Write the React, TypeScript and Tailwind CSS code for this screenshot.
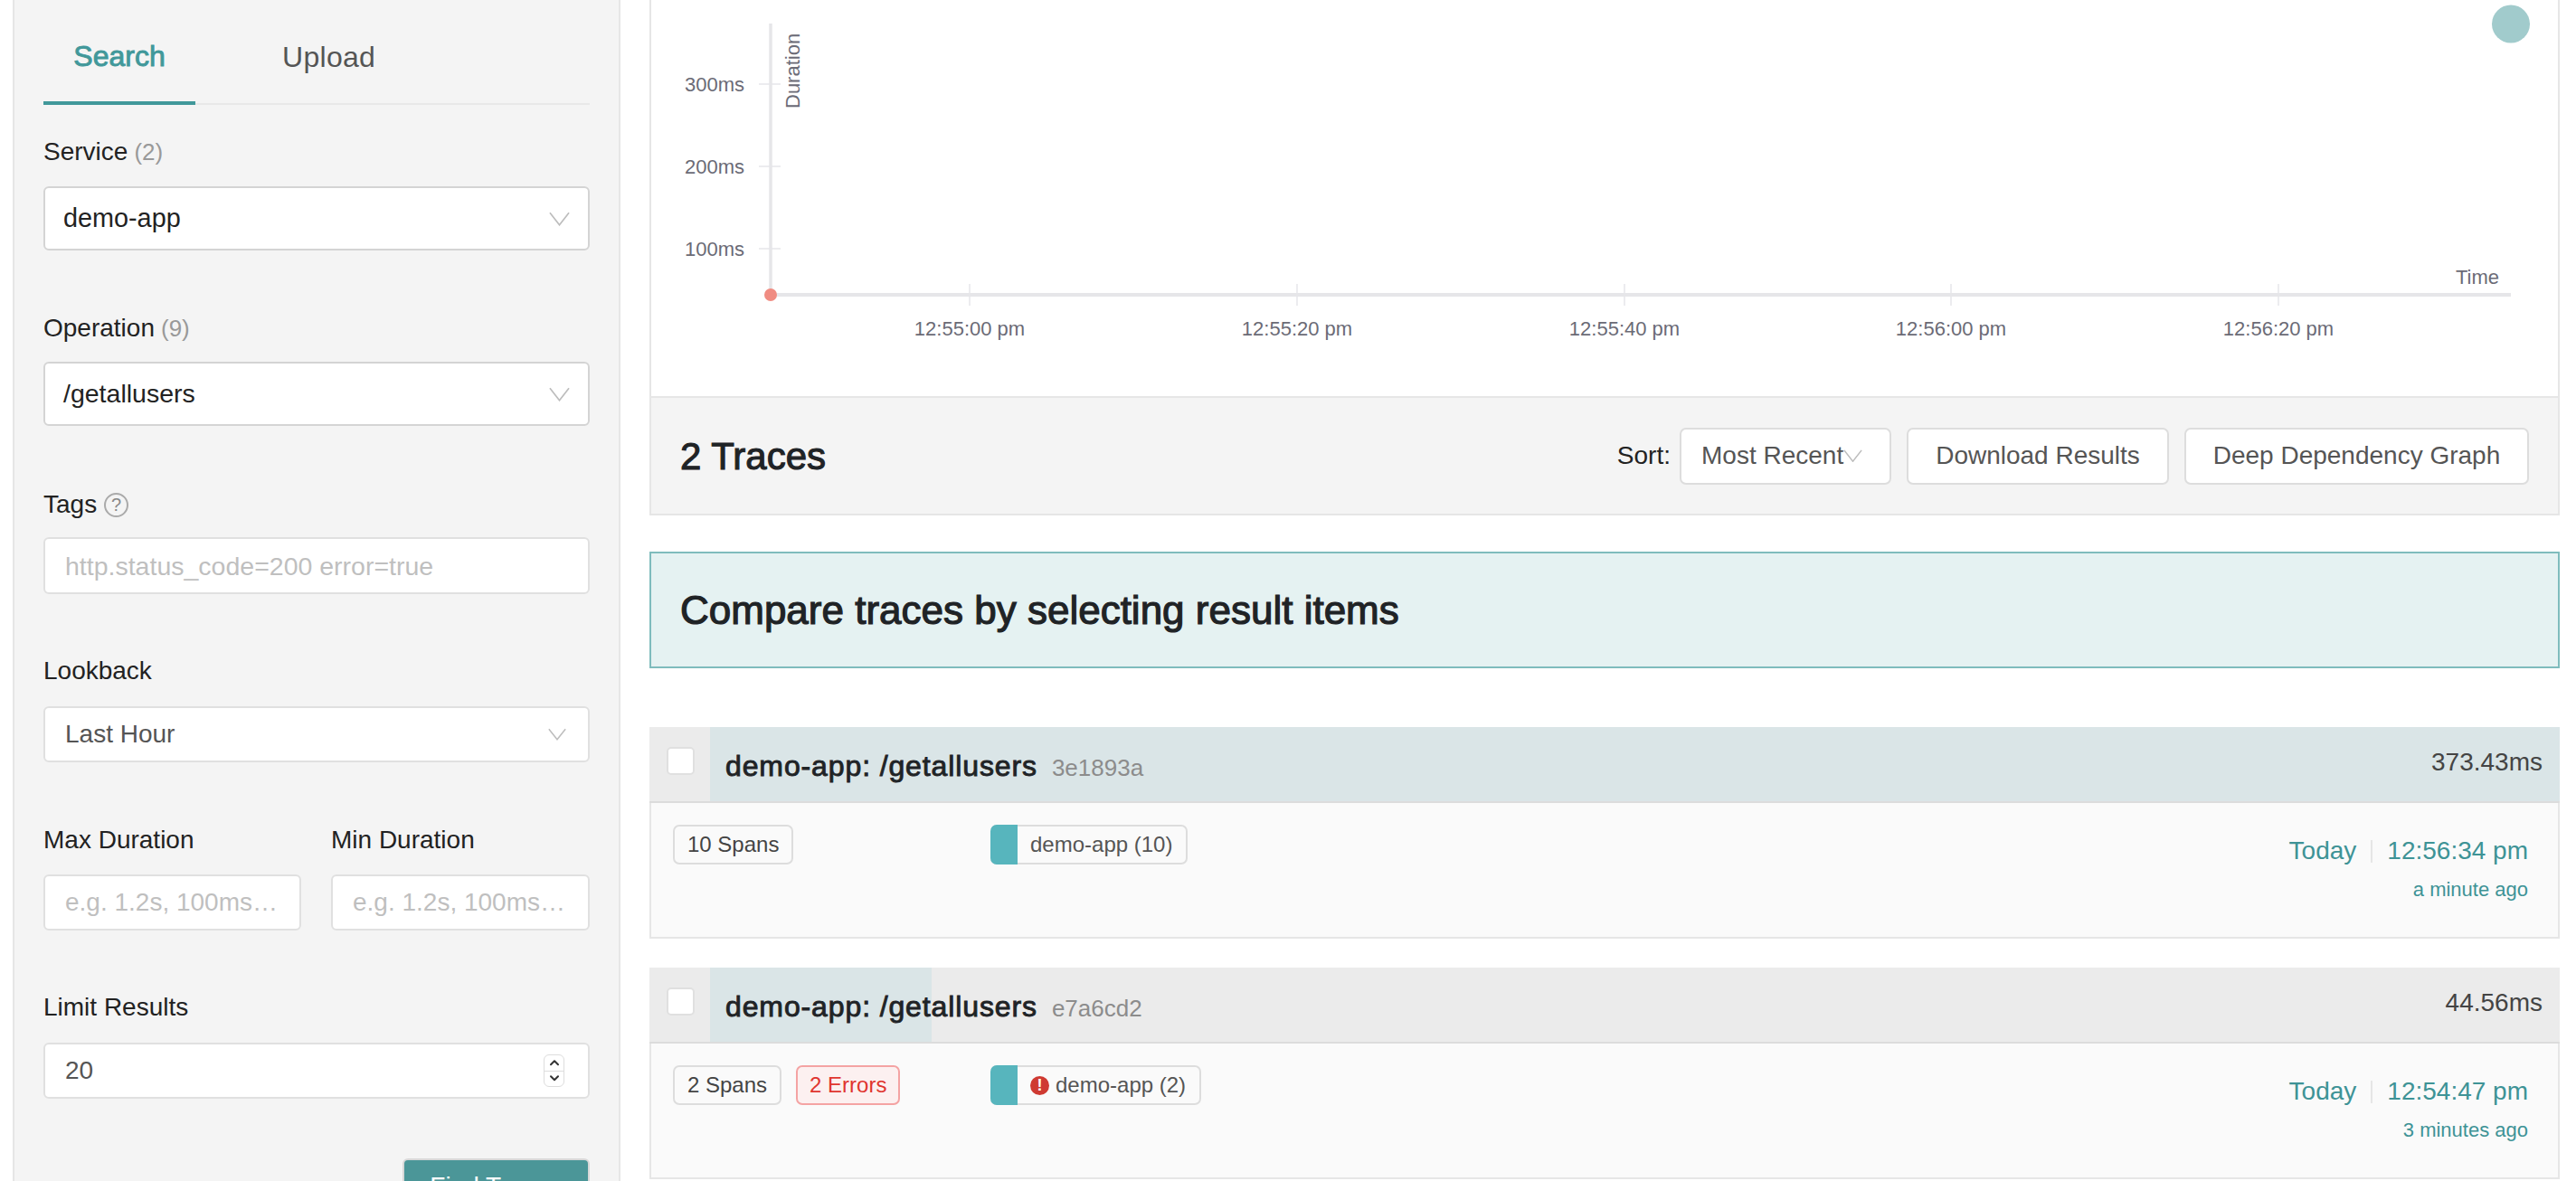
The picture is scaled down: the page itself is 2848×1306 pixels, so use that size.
import { ChevronDown, ChevronUp } from "lucide-react";

const Chevron = ({ className }: { className: string }) => (
  <svg className={className} viewBox="0 0 24 16" fill="none" stroke="#bdbdbd" strokeWidth="1.8">
    <path d="M1 1 L12 15 L23 1" />
  </svg>
);

const Label = ({ children }: { children: React.ReactNode }) => (
  <div className="h-10 flex items-center text-[28px] text-[#222]">{children}</div>
);

const xTicks = [
  { x: 352, t: "12:55:00 pm" },
  { x: 714, t: "12:55:20 pm" },
  { x: 1076, t: "12:55:40 pm" },
  { x: 1437, t: "12:56:00 pm" },
  { x: 1799, t: "12:56:20 pm" },
];

const yTicks = [
  { y: 93, t: "300ms" },
  { y: 184, t: "200ms" },
  { y: 275, t: "100ms" },
];

const Chart = () => (
  <svg className="block w-[2108px] h-[438px]" fontSize="22">
    {yTicks.map((v) => (
      <g key={v.t}>
        <line x1="119" x2="143" y1={v.y} y2={v.y} stroke="#ececef" strokeWidth="2" />
        <text x="103" y={v.y + 8} textAnchor="end" fill="#6b6b76">
          {v.t}
        </text>
      </g>
    ))}
    {xTicks.map((v) => (
      <g key={v.t}>
        <line x1={v.x} x2={v.x} y1="314" y2="338" stroke="#ececef" strokeWidth="2" />
        <text x={v.x} y="371" textAnchor="middle" fill="#6b6b76">
          {v.t}
        </text>
      </g>
    ))}
    <line x1="132" x2="132" y1="26" y2="326" stroke="#e6e6e9" strokeWidth="3.5" />
    <line x1="132" x2="2056" y1="326" y2="326" stroke="#e6e6e9" strokeWidth="4" />
    <text transform="translate(164,120) rotate(-90)" fill="#6b6b76">
      Duration
    </text>
    <text x="1995" y="314" fill="#6b6b76">
      Time
    </text>
    <circle cx="132" cy="326" r="7" fill="#f08c82" />
    <circle cx="2056" cy="26.5" r="21" fill="#a1cbcc" />
  </svg>
);

type trace = {
  hash: string;
  duration: string;
  barClass: string;
  spans: string;
  errors?: string;
  service: string;
  time: string;
  ago: string;
};

const traces: trace[] = [
  {
    hash: "3e1893a",
    duration: "373.43ms",
    barClass: "w-full",
    spans: "10 Spans",
    service: "demo-app (10)",
    time: "12:56:34 pm",
    ago: "a minute ago",
  },
  {
    hash: "e7a6cd2",
    duration: "44.56ms",
    barClass: "w-[245px]",
    spans: "2 Spans",
    errors: "2 Errors",
    service: "demo-app (2)",
    time: "12:54:47 pm",
    ago: "3 minutes ago",
  },
];

const TraceCard = ({ item }: { item: trace }) => (
  <div className="w-full">
    <div className="flex h-[84px] bg-[#ebebeb] border-b-2 border-[#dcdcdc]">
      <div className="w-[67px] shrink-0 pl-[19px] pt-[22px]">
        <div className="w-[31px] h-[31px] bg-white border-2 border-[#e0e0e0] rounded-[5px]"></div>
      </div>
      <div className="relative flex-1 flex items-start">
        <div className={`absolute left-0 top-0 h-full bg-[#dae5e7] ${item.barClass}`}></div>
        <div className="relative flex items-baseline pl-[17px] pt-[24px]">
          <span className="text-[32px] leading-[38px] tracking-[0.88px] text-[#1f2326] [-webkit-text-stroke:0.9px_#1f2326]">
            demo-app: /getallusers
          </span>
          <span className="ml-[16px] text-[26px] text-[#8c8c8c]">{item.hash}</span>
        </div>
        <div className="relative ml-auto pr-[19px] pt-[23px] text-[28px] leading-[32px] text-[#444]">
          {item.duration}
        </div>
      </div>
    </div>
    <div className="flex h-[150px] bg-[#fafafa] border-x-2 border-b-2 border-[#e6e6e6] pl-[24px] pr-[33px]">
      <div className="w-[351px] shrink-0 flex items-start gap-[16px] pt-[24px]">
        <div className="h-[44px] px-[14px] flex items-center text-[24px] text-[#444] border-2 border-[#ddd] rounded-[7px]">
          {item.spans}
        </div>
        {item.errors && (
          <div className="h-[44px] px-[13px] flex items-center text-[24px] text-[#e0352f] bg-[#fcf0f0] border-2 border-[#f4a3a3] rounded-[7px]">
            {item.errors}
          </div>
        )}
      </div>
      <div className="pt-[24px]">
        <div className="h-[44px] flex items-center text-[24px] text-[#555] border-2 border-l-0 border-[#ddd] rounded-[7px] pr-[15px]">
          <div className="w-[30px] h-[44px] bg-[#57b5bd] rounded-l-[7px] mr-[14px]"></div>
          {item.errors && (
            <div className="w-[21px] h-[21px] mr-[7px] rounded-full bg-[#cf3a32] flex items-center justify-center text-white text-[18px] font-bold">
              !
            </div>
          )}
          {item.service}
        </div>
      </div>
      <div className="ml-auto pt-[36px] text-[#3e9396] flex flex-col items-end">
        <div className="flex items-center text-[28px] leading-[34px]">
          Today
          <span className="w-[2px] h-[25px] bg-[#e6e6e6] mx-[16px]"></span>
          {item.time}
        </div>
        <div className="text-[22px] leading-[28px] mt-[12px]">{item.ago}</div>
      </div>
    </div>
  </div>
);

const App = () => {
  return (
    <div className="w-[2848px] h-[1306px] overflow-hidden bg-white flex font-['Liberation_Sans',Arial,sans-serif]">
      <div className="ml-[14px] w-[672px] h-[1306px] overflow-hidden bg-[#f4f4f4] border-x-2 border-[#e6e6e6] px-[32px] flex flex-col shrink-0">
        <div className="h-[116px] shrink-0 flex gap-[64px] border-b-2 border-[#e8e8e8] text-[32px]">
          <div className="h-[116px] w-[168px] flex items-center justify-center pt-[12px] border-b-4 border-[#41989a] text-[#41989a] [-webkit-text-stroke:0.9px_#41989a]">
            Search
          </div>
          <div className="h-[114px] px-[32px] flex items-center pt-[12px] text-[#555] tracking-[0.3px]">Upload</div>
        </div>

        <div className="mt-[32px]">
          <Label>
            Service <span className="ml-[7px] text-[26px] text-[#999]">(2)</span>
          </Label>
        </div>
        <div className="mt-[18px] h-[71px] shrink-0 bg-white border-2 border-[#d4d4d4] rounded-[6px] flex items-center justify-between pl-[20px] pr-[20px] text-[28.8px] text-[#222]">
          demo-app
          <Chevron className="w-[23px] h-[16px]" />
        </div>

        <div className="mt-[66px]">
          <Label>
            Operation <span className="ml-[7px] text-[26px] text-[#999]">(9)</span>
          </Label>
        </div>
        <div className="mt-[17px] h-[71px] shrink-0 bg-white border-2 border-[#d4d4d4] rounded-[6px] flex items-center justify-between pl-[20px] pr-[20px] text-[28.5px] text-[#222]">
          /getallusers
          <Chevron className="w-[23px] h-[16px]" />
        </div>

        <div className="mt-[67px]">
          <Label>
            Tags
            <span className="ml-[8px] w-[27px] h-[27px] rounded-full border-2 border-[#aaa] text-[#888] text-[20px] flex items-center justify-center">
              ?
            </span>
          </Label>
        </div>
        <input
          className="mt-[16px] h-[63px] shrink-0 w-full bg-white border-2 border-[#e0e0e0] rounded-[6px] pl-[22px] pt-[2px] text-[28.5px] outline-none placeholder:text-[#bfbfbf]"
          placeholder="http.status_code=200 error=true"
        />

        <div className="mt-[65px]">
          <Label>Lookback</Label>
        </div>
        <div className="mt-[19px] h-[62px] shrink-0 bg-white border-2 border-[#e0e0e0] rounded-[6px] flex items-center justify-between pl-[22px] pr-[24px] text-[28px] text-[#555]">
          Last Hour
          <Chevron className="w-[20px] h-[16px]" />
        </div>

        <div className="mt-[66px] flex gap-[33px]">
          <div className="w-[285px]">
            <Label>Max Duration</Label>
            <input
              className="mt-[18px] h-[62px] w-full bg-white border-2 border-[#e0e0e0] rounded-[6px] pl-[22px] pr-[20px] text-[28px] outline-none text-ellipsis placeholder:text-[#bfbfbf]"
              placeholder="e.g. 1.2s, 100ms…"
            />
          </div>
          <div className="w-[286px]">
            <Label>Min Duration</Label>
            <input
              className="mt-[18px] h-[62px] w-full bg-white border-2 border-[#e0e0e0] rounded-[6px] pl-[22px] pr-[20px] text-[28px] outline-none text-ellipsis placeholder:text-[#bfbfbf]"
              placeholder="e.g. 1.2s, 100ms…"
            />
          </div>
        </div>

        <div className="mt-[65px]">
          <Label>Limit Results</Label>
        </div>
        <div className="mt-[19px] h-[62px] shrink-0 bg-white border-2 border-[#e0e0e0] rounded-[6px] flex items-center justify-between pl-[22px] pr-[26px] text-[28px] text-[#555]">
          20
          <div className="w-[23px] h-[36px] border border-[#ddd] rounded-[6px] flex flex-col items-center text-[#333]">
            <ChevronUp size={16} strokeWidth={3} className="h-[17px]" />
            <div className="w-full h-px bg-[#ddd]"></div>
            <ChevronDown size={16} strokeWidth={3} className="h-[17px]" />
          </div>
        </div>

        <div className="mt-[66px] self-end w-[207px] h-[62px] shrink-0 bg-[#4b9698] border-2 border-[#d8d8d8] rounded-[6px] flex items-center justify-center text-white text-[28px]">
          Find Traces
        </div>
      </div>

      <div className="ml-[32px] w-[2112px] shrink-0 flex flex-col">
        <div className="border-x-2 border-b-2 border-[#e6e6e6]">
          <Chart />
        </div>
        <div className="h-[130px] bg-[#f4f4f4] border-x-2 border-b-2 border-[#e6e6e6] flex items-center pl-[32px] pr-[32px]">
          <div className="text-[42px] text-[#1f2326] [-webkit-text-stroke:1.1px_#1f2326]">2 Traces</div>
          <div className="ml-auto text-[28px] text-[#222] mr-[10px]">Sort:</div>
          <div className="w-[234px] h-[63px] bg-white border-2 border-[#ddd] rounded-[7px] flex items-center pl-[22px] text-[28px] text-[#555]">
            Most Recent
            <Chevron className="w-[21px] h-[14px]" />
          </div>
          <div className="ml-[17px] w-[290px] h-[63px] bg-white border-2 border-[#ddd] rounded-[7px] flex items-center justify-center text-[28px] text-[#555]">
            Download Results
          </div>
          <div className="ml-[17px] w-[381px] h-[63px] bg-white border-2 border-[#ddd] rounded-[7px] flex items-center justify-center text-[28px] text-[#555]">
            Deep Dependency Graph
          </div>
        </div>
        <div className="mt-[40px] h-[129px] bg-[#e5f2f2] border-2 border-[#7fbcbd] flex items-center pl-[32px] text-[44px] text-[#1f2326] [-webkit-text-stroke:1.2px_#1f2326]">
          Compare traces by selecting result items
        </div>
        <div className="mt-[65px] flex flex-col gap-[32px]">
          {traces.map((t) => (
            <TraceCard key={t.hash} item={t} />
          ))}
        </div>
      </div>
    </div>
  );
};

export default App;
